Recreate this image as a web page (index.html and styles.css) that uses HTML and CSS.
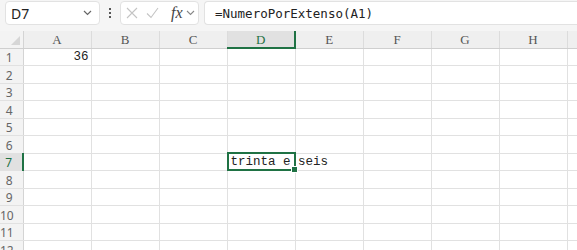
FILE: index.html
```html
<!DOCTYPE html>
<html lang="pt">
<head>
    <meta charset="UTF-8">
    <title>Planilha</title>
    <link rel="stylesheet" href="styles.css">
</head>
<body>
    <div class="toolbar">
        <div class="name-box">
            <span>D7</span>
            <svg class="chevron" width="9" height="6" viewBox="0 0 9 6"><path d="M1 1l3.5 3.5L8 1" fill="none" stroke="#666" stroke-width="1.2"/></svg>
        </div>
        <div class="dots"><i></i><i></i><i></i></div>
        <div class="fx-box">
            <svg width="12" height="12" viewBox="0 0 12 12"><path d="M1 1l10 10M11 1L1 11" stroke="#c4c4c4" stroke-width="1.1"/></svg>
            <svg width="13" height="12" viewBox="0 0 13 12"><path d="M1 6.5l4 4L12 1" fill="none" stroke="#c4c4c4" stroke-width="1.1"/></svg>
            <span class="fx">fx</span>
            <svg width="9" height="6" viewBox="0 0 9 6"><path d="M1 1l3.5 3.5L8 1" fill="none" stroke="#888" stroke-width="1.1"/></svg>
        </div>
        <div class="formula">=NumeroPorExtenso(A1)</div>
    </div>

    <table class="sheet">
        <colgroup>
            <col class="c-head">
            <col><col><col><col><col><col><col><col><col>
        </colgroup>
        <tr class="cols">
            <th class="corner"></th>
            <th>A</th><th>B</th><th>C</th><th class="active">D</th><th>E</th><th>F</th><th>G</th><th>H</th><th></th>
        </tr>
        <tr><th>1</th><td class="num">36</td><td></td><td></td><td></td><td></td><td></td><td></td><td></td><td></td></tr>
        <tr><th>2</th><td></td><td></td><td></td><td></td><td></td><td></td><td></td><td></td><td></td></tr>
        <tr><th>3</th><td></td><td></td><td></td><td></td><td></td><td></td><td></td><td></td><td></td></tr>
        <tr><th>4</th><td></td><td></td><td></td><td></td><td></td><td></td><td></td><td></td><td></td></tr>
        <tr><th>5</th><td></td><td></td><td></td><td></td><td></td><td></td><td></td><td></td><td></td></tr>
        <tr><th>6</th><td></td><td></td><td></td><td></td><td></td><td></td><td></td><td></td><td></td></tr>
        <tr><th class="active">7</th><td></td><td></td><td></td><td class="selected">trinta e seis<span class="sel-box"><span class="handle"></span></span></td><td></td><td></td><td></td><td></td><td></td></tr>
        <tr><th>8</th><td></td><td></td><td></td><td></td><td></td><td></td><td></td><td></td><td></td></tr>
        <tr><th>9</th><td></td><td></td><td></td><td></td><td></td><td></td><td></td><td></td><td></td></tr>
        <tr><th>10</th><td></td><td></td><td></td><td></td><td></td><td></td><td></td><td></td><td></td></tr>
        <tr><th>11</th><td></td><td></td><td></td><td></td><td></td><td></td><td></td><td></td><td></td></tr>
        <tr><th>12</th><td></td><td></td><td></td><td></td><td></td><td></td><td></td><td></td><td></td></tr>
    </table>
</body>
</html>
```

FILE: styles.css
```css
body {
    margin: 0;
    padding: 0;
    background-color: #fff;
    font-family: 'Noto Sans', sans-serif;
    overflow: hidden;
}

.toolbar {
    display: flex;
    align-items: center;
    height: 24px;
    padding: 1px 0 6px 5px;
    background-color: #f5f5f5;
}

.name-box, .fx-box, .formula {
    height: 24px;
    box-sizing: border-box;
    background-color: #fff;
    border: 1px solid #e2e2e2;
    border-radius: 4px;
    display: flex;
    align-items: center;
}

.name-box {
    width: 95px;
    padding: 0 7px 0 5px;
    justify-content: space-between;
    font-size: 14px;
    color: #222;
}

.dots {
    width: 20px;
    display: flex;
    flex-direction: column;
    align-items: center;
    gap: 2px;
}

.dots i {
    width: 2px;
    height: 2px;
    background-color: #555;
}

.fx-box {
    width: 79px;
    padding: 0 0 0 5px;
    gap: 8px;
}

.fx-box .fx {
    font-family: 'Liberation Serif', serif;
    font-style: italic;
    font-size: 16px;
    color: #444;
    margin-left: 4px;
    margin-right: -5px;
}

.formula {
    flex: 1;
    margin-left: 5px;
    padding-left: 10px;
    border-right: none;
    border-radius: 4px 0 0 4px;
    font-family: 'DejaVu Sans Mono', monospace;
    font-size: 12.5px;
    color: #222;
}

.sheet {
    border-collapse: collapse;
    table-layout: fixed;
    width: 635px;
}

.sheet col {
    width: 68px;
}

.sheet col.c-head {
    width: 23px;
}

.sheet tr {
    height: 17.5px;
}

.sheet tr.cols {
    height: 17px;
}

.sheet th, .sheet td {
    padding: 0;
    border: 1px solid #e1e1e1;
    border-top: none;
    border-left: none;
    vertical-align: bottom;
    white-space: nowrap;
}

.cols th {
    background-color: #efefef;
    border-right-color: #dcdcdc;
    border-bottom: 1px solid #cfcfcf;
    font-family: 'Liberation Serif', serif;
    font-weight: normal;
    font-size: 13px;
    color: #555;
    text-align: center;
    vertical-align: middle;
    line-height: 15px;
}

.cols th.active {
    background-color: #e1e1e1;
    border-bottom: 2px solid #1f7244;
    color: #1f7244;
}

.cols th.corner {
    position: relative;
}

.cols th.corner::after {
    content: '';
    position: absolute;
    right: 3px;
    bottom: 3px;
    border-left: 9px solid transparent;
    border-bottom: 9px solid #d6d6d6;
}

.sheet tr th:first-child {
    background-color: #f3f3f3;
    border-right-color: #d4d4d4;
    font-family: 'Noto Sans', sans-serif;
    font-weight: normal;
    font-size: 12px;
    line-height: 15px;
    color: #666;
    text-align: right;
    padding-right: 10px;
}

.sheet tr th.active {
    background-color: #e1e1e1;
    border-right: 2px solid #1f7244;
    color: #1f7244;
}

.sheet td {
    font-family: 'Liberation Mono', monospace;
    font-size: 12.5px;
    line-height: 15px;
    color: #222;
    overflow: visible;
}

.sheet td.num {
    text-align: right;
    padding-right: 2px;
}

.sheet td.selected {
    position: relative;
    padding-left: 3px;
}

.sel-box {
    position: absolute;
    top: -2px;
    left: -1px;
    right: -1px;
    bottom: -1px;
    border: 2px solid #1f7244;
}

.handle {
    position: absolute;
    right: -4px;
    bottom: -4px;
    width: 5px;
    height: 5px;
    background-color: #1f7244;
    border: 1px solid #fff;
}
```
